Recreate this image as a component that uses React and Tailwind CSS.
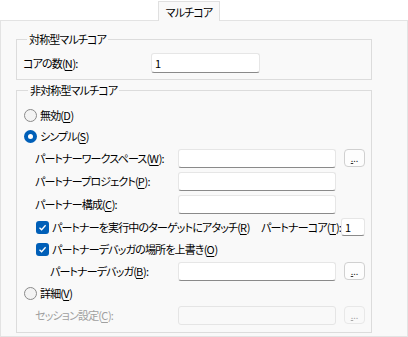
import React from "react";

const font =
  "font-['Noto_Sans_CJK_JP','Noto_Sans',sans-serif] [font-feature-settings:'palt'] text-[11px] tracking-[-0.85px] leading-[16px] whitespace-nowrap";

// underlined access key
function K({ children }) {
  return <span className="underline underline-offset-[2px] tracking-[-0.3px]">{children}</span>;
}

function TextBox({ value = "", width = "w-[158px]", disabled = false }) {
  return (
    <div
      className={
        width +
        " h-[19px] shrink-0 rounded-[3px] border flex items-center pl-[3px] " +
        (disabled
          ? "bg-[#f9f9f9] border-[#e5e5e5]"
          : "bg-white border-[#e6e6e6] border-b-[#8a8a8a]")
      }
    >
      {value}
    </div>
  );
}

function DotsButton({ disabled = false }) {
  return (
    <div
      className={
        "w-[21px] h-[18px] shrink-0 ml-[8px] rounded-[4px] border flex items-end justify-center pb-[3px] text-[9px] leading-[9px] tracking-normal " +
        (disabled
          ? "bg-[#f9f9f9] border-[#e8e8e8] text-[#a8a8a8]"
          : "bg-[#fdfdfd] border-[#d0d0d0] text-[#333]")
      }
    >
      <span className="underline">.</span>..
    </div>
  );
}

function Radio({ checked }) {
  return checked ? (
    <div className="w-[13px] h-[13px] shrink-0 rounded-full bg-[#005fb8] flex items-center justify-center">
      <div className="w-[5px] h-[5px] rounded-full bg-white" />
    </div>
  ) : (
    <div className="w-[13px] h-[13px] shrink-0 rounded-full border border-[#8a8a8a] bg-[#f3f3f3]" />
  );
}

function Check() {
  return (
    <div className="w-[13px] h-[13px] shrink-0 rounded-[3px] bg-[#005fb8] flex items-center justify-center">
      <svg width="9" height="9" viewBox="0 0 9 9">
        <path d="M1.5 4.8 L3.6 6.8 L7.6 2.2" fill="none" stroke="white" strokeWidth="1.3" />
      </svg>
    </div>
  );
}

export default function App() {
  return (
    <div className={"w-[408px] h-[337px] bg-white overflow-hidden flex flex-col text-black " + font}>
      {/* TAB STRIP */}
      <div className="h-[20px] flex pt-[1px]">
        <div className="w-[158px]" />
        <div className="relative z-10 w-[62px] h-[20px] border border-b-0 border-[#e0e0e0] bg-[#f9f9f9] flex items-center justify-center pt-[1px]">
          マルチコア
        </div>
      </div>

      {/* PANEL */}
      <div className="flex-1 border border-[#e3e3e3] bg-[#f9f9f9] px-[15px]">
        {/* SYMMETRIC */}
        <fieldset className="mt-[10px] w-[356px] border border-[#dcdcdc] pt-[6px] pb-[6px] pl-[6px]">
          <legend className="ml-[4px] px-[2px]">対称型マルチコア</legend>
          <div className="h-[20px] flex items-center">
            <span className="w-[128px] shrink-0">
              コアの数(<K>N</K>):
            </span>
            <div className="w-[109px] h-[20px] bg-white border border-[#e6e6e6] border-b-[#8a8a8a] rounded-[3px] flex items-center pl-[3px]">
              1
            </div>
          </div>
        </fieldset>

        {/* ASYMMETRIC */}
        <fieldset className="mt-[2px] w-[356px] border border-[#dcdcdc] pb-[7px] pl-[7px]">
          <legend className="ml-[4px] px-[2px]">非対称型マルチコア</legend>

          <div className="mt-[7px] h-[20px] flex items-center gap-[3px]">
            <Radio />
            <span>
              無効(<K>D</K>)
            </span>
          </div>

          <div className="mt-[1px] h-[20px] flex items-center gap-[3px]">
            <Radio checked />
            <span>
              シンプル(<K>S</K>)
            </span>
          </div>

          <div className="mt-[2px] h-[20px] flex items-center pl-[11px]">
            <span className="w-[143px] shrink-0">
              パートナーワークスペース(<K>W</K>):
            </span>
            <TextBox />
            <DotsButton />
          </div>

          <div className="mt-[3px] h-[20px] flex items-center pl-[11px]">
            <span className="w-[143px] shrink-0">
              パートナープロジェクト(<K>P</K>):
            </span>
            <TextBox />
          </div>

          <div className="mt-[3px] h-[20px] flex items-center pl-[11px]">
            <span className="w-[143px] shrink-0">
              パートナー構成(<K>C</K>):
            </span>
            <TextBox />
          </div>

          <div className="mt-[3px] h-[20px] flex items-center pl-[12px]">
            <Check />
            <span className="w-[212px] shrink-0 pl-[3px]">
              パートナーを実行中のターゲットにアタッチ(<K>R</K>)
            </span>
            <span className="w-[80px] shrink-0">
              パートナーコア(<K>T</K>):
            </span>
            <div className="w-[24px] h-[18px] shrink-0 bg-white border border-[#e6e6e6] border-b-[#8a8a8a] rounded-[3px] flex items-center pl-[3px]">
              1
            </div>
          </div>

          <div className="mt-[2px] h-[20px] flex items-center pl-[12px]">
            <Check />
            <span className="pl-[3px]">
              パートナーデバッガの場所を上書き(<K>O</K>)
            </span>
          </div>

          <div className="mt-[2px] h-[20px] flex items-center pl-[26px]">
            <span className="w-[128px] shrink-0">
              パートナーデバッガ(<K>B</K>):
            </span>
            <TextBox />
            <DotsButton />
          </div>

          <div className="mt-[2px] h-[20px] flex items-center gap-[3px]">
            <Radio />
            <span>
              詳細(<K>V</K>)
            </span>
          </div>

          <div className="mt-[2px] h-[20px] flex items-center pl-[11px] text-[#a0a0a0]">
            <span className="w-[143px] shrink-0">
              セッション設定(<K>C</K>):
            </span>
            <TextBox disabled />
            <DotsButton disabled />
          </div>
        </fieldset>
      </div>
    </div>
  );
}
